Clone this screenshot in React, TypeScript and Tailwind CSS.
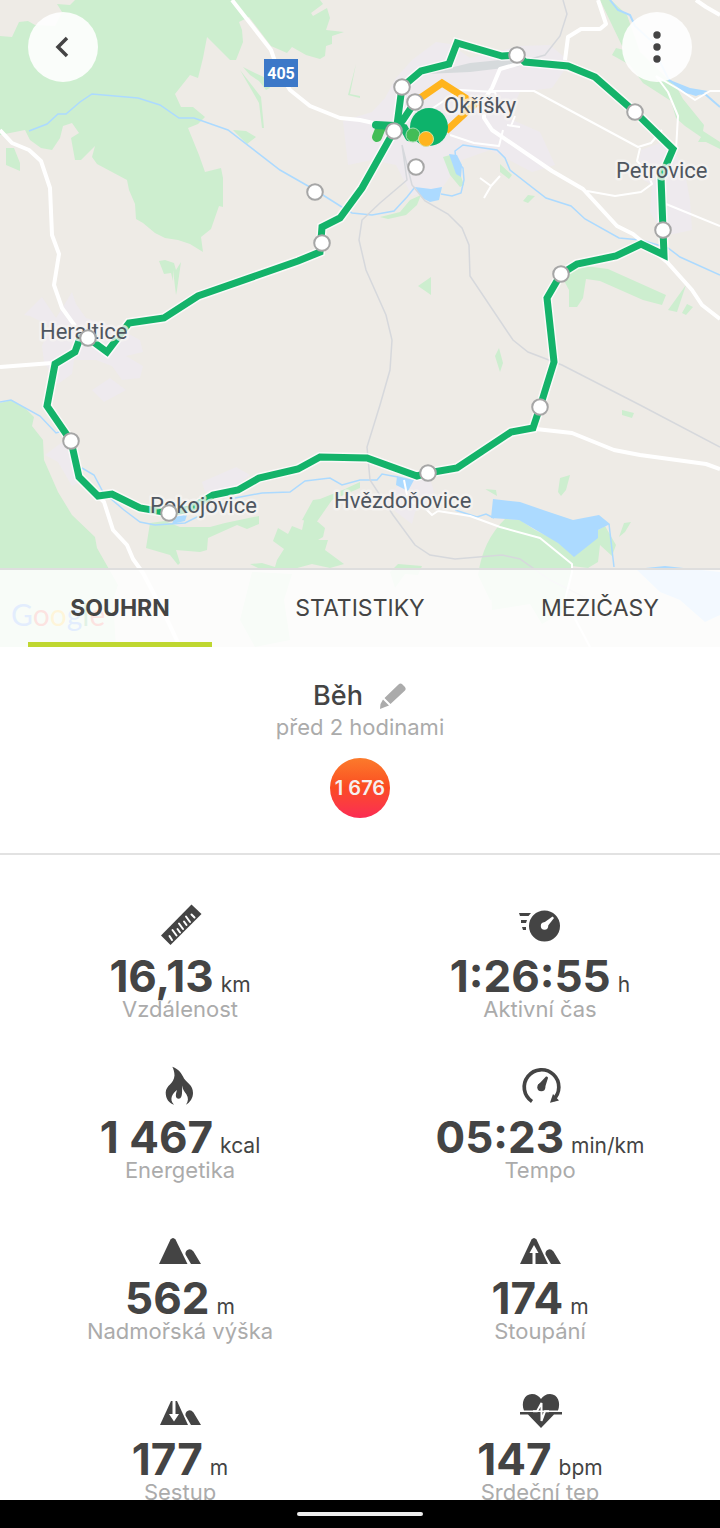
import React, { useState } from 'react';

const ROUTE =
  'M394 131L397 125L402 87L421 71L449 64L457 43L502 56L517 55L525 62L568 66L595 77L635 112L673 149L661 177L663 230L664 255L641 244L616 256L577 264L561 274L547 298L554 362L540 407L533 428L511 432L457 468L428 473L417 476L367 458L320 457L298 469L259 478L238 490L213 495L190 509L169 513L140 508L112 494L98 496L79 477L71 441L47 406L55 364L75 352L80 338H88L107 352L129 323L164 318L198 296L298 261L320 252L322 227L340 218L362 188L394 131L403 120L415 102';

const MARKERS = [
  [517, 55], [402, 87], [415, 102], [394, 131], [416, 167], [635, 112], [663, 230],
  [561, 274], [540, 407], [428, 473], [169, 513], [71, 441], [88, 338], [322, 243], [315, 192],
];

const PLACES = [
  { name: 'Okříšky', x: 444, y: 113 },
  { name: 'Petrovice', x: 616, y: 178 },
  { name: 'Heraltice', x: 40, y: 339 },
  { name: 'Pokojovice', x: 150, y: 513 },
  { name: 'Hvězdoňovice', x: 334, y: 508 },
];

const RouteMap = () => (
  <svg viewBox="0 0 720 647" preserveAspectRatio="xMidYMin slice" className="absolute inset-0 h-full w-full bg-[#eeebe6]" aria-label="Mapa trasy">
    {/* Built-up areas */}
    <g fill="#eeeaee">
      <path d="M343 121L372 112L385 98L396 78L412 60L436 42L450 44L470 58L520 46L550 45L570 62L552 88L520 92L508 118L540 132L555 165L532 172L490 150L462 160L442 188L412 196L396 165L372 160L348 165Z" />
      <path d="M641 150L668 140L684 168L690 200L692 230L664 236L650 212L652 185L636 175Z" />
      <path d="M24 315L42 297L56 318L72 292L76 304L86 318L118 328L140 340L143 352L126 356L143 366L140 378L122 380L112 366L96 360L74 360L72 374L58 384L44 362L42 346L50 326L30 316ZM92 390L110 378L126 390L104 402Z" />
      <path d="M45 455L65 440L74 452L84 480L72 486L58 462ZM202 482L236 467L250 475L232 490L205 492ZM405 480L430 478L434 492L415 512L412 524L396 512L382 500Z" />
    </g>

    {/* Forests */}
    <g fill="#cdeecf">
      <path d="M75 0L70 5L57 4L62 12L55 26L35 25L28 21L19 22L12 37L0 36V135L25 130L30 140L41 148L52 150L60 138L63 126L72 123L79 133L71 138L75 160H81L95 146L92 157L97 164L127 180L129 190L135 204L136 219L143 223L155 233L165 238L178 240L190 244L203 252L201 237L211 229L219 206L223 207V178L221 168L205 172L199 155L188 128L198 124L205 117L193 107H181L175 94L190 75L198 78L203 58L207 37L230 60H236L243 42L242 30L239 22L249 17L271 46L287 53L292 47L306 55L320 59L325 56L326 46L332 44V36L344 32L326 30L330 18L327 8L313 16L311 13L323 4L320 0Z" />
      <path d="M6 148H14L20 163L20 171L6 165ZM233 130L246 131L256 137L247 144ZM159 261L165 260L174 263L176 270L181 262L177 290L176 295L173 270L173 281L171 273L164 274Z" />
      <path d="M243 67L255 73L266 78L270 88L266 90L259 81L250 75ZM240 70L261 97L264 128L262 128L259 103ZM356 64L348 95L360 98V96L350 94Z" />
      <path d="M600 0H611L627 15L640 52L668 79L677 88L683 99L704 125L703 131L720 142V149L706 142L698 142L701 137L685 126L676 118L671 101L643 83L630 65L612 55L616 48L624 50Z" />
      <path d="M443 157L450 155L457 165L464 185L460 187L450 175ZM500 164L512 175L509 179L500 172ZM523 201L528 195L535 196L528 203ZM380 217L400 212L410 200L421 195L417 205L406 215L388 219ZM418 286L431 277V295Z" />
      <path d="M561 275L585 266L608 269L666 295L662 305L643 300L600 281L586 279L583 298L577 307H569V290ZM668 310L686 285L677 312ZM687 304L693 307L686 315L682 313ZM499 348L503 363L500 372L495 356ZM622 410L634 413L632 418L622 415ZM484 489L496 490L497 496L485 489ZM560 478L570 475L566 490L561 496L558 492ZM624 523L631 522L625 532L619 537Z" />
      <path d="M0 403L12 400L25 408L34 417L32 426L43 440L44 460L58 492L72 515L95 537L97 548L118 585L113 600L116 647H0Z" />
      <path d="M150 523L165 521L180 527L210 527L225 523L259 516L259 524L247 529L237 525L208 538L207 550L200 552L176 550L180 563L178 565L170 555L146 548Z" />
      <path d="M320 499L345 489L360 482V488L332 500L316 523L302 520L313 500ZM305 516L318 522L325 528L323 537L318 540L328 540L325 550L344 564L330 568L312 564L290 570L262 570L250 564L262 563L275 567L277 560L284 549L273 541L278 528L288 534L292 526L302 530ZM398 564L422 566L418 575L405 574L395 588L390 572Z" />
      <path d="M505 519L520 520L535 530L575 550L590 535L605 526L616 545L612 556L600 545L598 562L588 568L572 566L568 590L545 598L518 590L490 600L478 575Q483 540 505 519Z" />
      <path d="M252 572L292 574L284 600L290 640L255 647L240 620ZM490 572H570L566 610L542 624L530 604L492 610Z" />
    </g>

    {/* Water */}
    <g fill="#acdaff">
      <path d="M415 187L431 189L442 187L439 200L430 202L422 198ZM449 154L457 155L462 165L461 177L456 174ZM493 499L520 502L546 511L573 520L599 515L610 524L598 530L598 538L574 557L558 543L519 520L491 518ZM670 80L690 88L708 91L696 96L686 93ZM397 476L414 480L408 491L396 485ZM175 516L187 515L185 521L172 524Z" />
      <path d="M636 569L665 566L720 572V615L705 622L680 600L660 592Z" />
    </g>
    <g fill="none" stroke="#acdaff" strokeWidth="2">
      <path strokeWidth="1.5" d="M29 131L47 124L58 114L66 114L80 102L92 94L138 98L160 105L179 118H194L228 130L280 170L315 190L345 209L352 213L372 215L394 211L407 197L415 187M441 194L452 196L461 193L464 180L463 168L456 160L455 151L463 145L497 150L505 158L510 170L546 198L571 206L585 219L619 238L641 240L668 248L680 257L720 275" />
      <path d="M610 0L618 10L630 15L635 26L648 38L656 44L660 62L669 80L686 92L705 94L720 107" />
      <path strokeWidth="1.5" d="M0 402L11 400L40 416L56 433L66 430M82 468L94 475L103 492L124 510L140 522L155 525L185 523L205 513L235 498L262 493L290 492L305 481L330 478L342 485L360 480L377 480L382 474L398 477M455 510L477 517L486 514L494 518M609 524L614 567" />
    </g>

    {/* Railways */}
    <g fill="none" stroke="#d6d8dc" strokeWidth="1.5">
      <path d="M563 0L567 14L560 36L545 55L520 62M402 145L407 180L380 203L362 220L359 240L366 270L386 315L392 340L390 370L380 405L367 447L370 480L393 515L415 545L430 555L455 559L502 555L520 559L550 580L590 600M402 145L412 185L425 201L448 214L462 228L469 245L470 276L513 340L528 352L562 365L640 405L720 447" />
      <path fill="#d6dadc" stroke="none" d="M425 74L470 63L520 58L520 66L470 72Z" />
    </g>

    {/* Roads */}
    <g fill="none" stroke="#fff" strokeWidth="4" strokeLinejoin="round">
      <path d="M232 0L271 50L278 70L290 90L310 106L340 118L360 120L378 124M0 130L12 143L29 150L41 161L50 188L52 235L59 254L54 285L62 308L75 326M0 367L52 363M78 475L104 502L113 530L127 545L133 559L143 573L165 615L180 647" />
      <path d="M598 0L606 24L600 29L581 29L568 37L565 60M696 0L706 7L720 15M525 62L500 69L492 88L484 100V118L492 130L552 171L583 189L617 226L633 234L667 262L692 290L702 305L720 319M536 429L572 433L614 450L640 455L706 464L720 469" />
      <path strokeWidth="2" d="M490 91H534L638 147L651 143L662 130M640 148L637 161L647 172L652 184L641 192L615 196L587 191M450 135L474 143L499 146L503 130M666 204L720 226M656 76L668 92L678 116L676 150L668 160M656 76L680 90L695 100L710 91H720M430 110L460 90L495 92L500 110" />
      <path strokeWidth="2" d="M480 178L491 186L500 176M491 186L484 198M507 125L520 127M515 116L511 126M404 480L408 500L425 508L432 515L438 511L470 516L500 527L540 538L572 564V572L565 600L590 647" />
    </g>

    {/* Road number shield */}
    <path d="M264 59H298V87H264Z" fill="#3c78c8" />
    <text x="281" y="79" textAnchor="middle" className="fill-white font-['Roboto',sans-serif] text-[16px] font-bold">405</text>

    {/* Recorded track */}
    <path d={ROUTE} fill="none" stroke="#fff" strokeOpacity="0.7" strokeWidth="10" />
    <path d="M381 127L377 137" stroke="#43bd57" strokeWidth="10" strokeLinecap="round" />
    <path d="M376 125L394 126L404 128L409 137" fill="none" stroke="#16b36a" strokeWidth="8" strokeLinecap="round" />
    <path d="M416 101L442 83L475 104L446 131" fill="none" stroke="#ffb41e" strokeWidth="7" />
    <path d={ROUTE} fill="none" stroke="#14b36a" strokeWidth="7" />
    <circle cx="429" cy="127" r="19" fill="#0db36b" />
    <circle cx="413" cy="135" r="7" fill="#43bd57" stroke="#a3deb0" />
    <circle cx="426" cy="139" r="7.5" fill="#ffb41e" stroke="#d9dd9a" />

    {PLACES.map((place) => (
      <text
        key={place.name}
        x={place.x}
        y={place.y}
        paintOrder="stroke"
        stroke="#f6f4f2"
        strokeOpacity="0.8"
        strokeWidth="5"
        strokeLinejoin="round"
        className="fill-[#4f565f] font-['Roboto',sans-serif] text-[22px]"
      >
        {place.name}
      </text>
    ))}

    {MARKERS.map(([x, y]) => (
      <circle key={`${x}-${y}`} cx={x} cy={y} r="7.8" fill="#fff" stroke="#a6a6a6" strokeWidth="2" />
    ))}

    <text x="11" y="626" className="font-['Lato',sans-serif] text-[30px]">
      <tspan fill="#4285f4">G</tspan>
      <tspan fill="#ea4335">o</tspan>
      <tspan fill="#fbbc05">o</tspan>
      <tspan fill="#4285f4">g</tspan>
      <tspan fill="#34a853">l</tspan>
      <tspan fill="#ea4335">e</tspan>
    </text>
  </svg>
);

const smallPeak = <path d="M32 38L26.5 28.5Q26 25.5 28.5 24Q31.5 22 34.5 25.5L42 38Z" />;

const icons = {
  ruler: (
    <>
      <path d="M32.5 0.5L42.5 10L11.5 41L2 31.5Z" />
      <path d="M10.5 32L13 36M13.5 26L17.5 31.5M18.5 25L21 28.5M20 19.5L24 25M25 17.5L27.5 21M27 12.5L31 18M32.5 10.5L35.5 13.5" stroke="#fff" strokeWidth="2" strokeLinecap="round" />
    </>
  ),
  timer: (
    <>
      <path d="M0 9H12L9.5 12H1ZM2 16H8L7 19H2ZM3 23H7V26H4Z" />
      <circle cx="25.5" cy="22" r="15.5" />
      <circle cx="25.5" cy="22" r="3.7" fill="#fff" />
      <path d="M24.5 19L33.5 12.5L35 14L28 23Z" fill="#fff" />
    </>
  ),
  flame: (
    <path d="M13.3 1.7C20 4 23 9 25 13.5C28 18 34 20 34 28C34 33 31 37.500 27 39.7C29.500 36 29.500 33 27.500 29.500C26 27 23.500 25 23.500 20.500C22.500 24 24.500 33.500 19.800 33.700C16 33.500 16.500 29.500 18 25C14 28 9.500 34 15 39.7C10 38 6.7 34 6.7 27.5C7 20 15 19 15.5 10.500C15.500 7 14.5 4 13.3 1.7Z" />
  ),
  pace: (
    <>
      <path d="M13 36.5A17.3 17.3 0 1 1 34 35" fill="none" stroke="currentColor" strokeWidth="3.7" />
      <path d="M34 29L40 35.5L31 37.7ZM19 20L27 11.5Q29 11 29 13L25.5 24Z" />
      <circle cx="22.3" cy="22.3" r="4" />
    </>
  ),
  altitude: (
    <>
      <path d="M0 38L11.5 13.5Q14 10.5 16.5 13.5L28.5 38Z" />
      {smallPeak}
    </>
  ),
  ascent: (
    <>
      <path d="M1 38L12.5 13.5Q15 10.5 17.5 13.5L29 38Z" />
      {smallPeak}
      <path d="M13.5 38V27H10.5L15 19L19.5 27H16.5V38Z" fill="#fff" />
    </>
  ),
  descent: (
    <>
      <path d="M1 38L12 14H18L29 38Z" />
      {smallPeak}
      <path d="M13.5 13V27H10L15 34.5L20 27H16.5V13Z" fill="#fff" />
    </>
  ),
  heart: (
    <>
      <path d="M5 23.5C2 16 5 7 13 7C17 7 20 9 22 12C24 9 27 7 31 7C39 7 42 16 39 23.5ZM1 25H43V27.5H35L22 41L9 27.5H1Z" />
      <path d="M14 24.3H18L22.5 16V34L26 24.3H30" fill="none" stroke="#fff" strokeWidth="2" />
    </>
  ),
};

const STATS: { icon: keyof typeof icons; value: string; unit: string; label: string }[] = [
  { icon: 'ruler', value: '16,13', unit: 'km', label: 'Vzdálenost' },
  { icon: 'timer', value: '1:26:55', unit: 'h', label: 'Aktivní čas' },
  { icon: 'flame', value: '1 467', unit: 'kcal', label: 'Energetika' },
  { icon: 'pace', value: '05:23', unit: 'min/km', label: 'Tempo' },
  { icon: 'altitude', value: '562', unit: 'm', label: 'Nadmořská výška' },
  { icon: 'ascent', value: '174', unit: 'm', label: 'Stoupání' },
  { icon: 'descent', value: '177', unit: 'm', label: 'Sestup' },
  { icon: 'heart', value: '147', unit: 'bpm', label: 'Srdeční tep' },
];

const TABS = ['SOUHRN', 'STATISTIKY', 'MEZIČASY'];

export default function App() {
  const [tab, setTab] = useState(TABS[0]);

  return (
    <div className="flex h-screen flex-col overflow-hidden bg-white font-['Inter',sans-serif] text-[#444]">
      <main className="min-h-0 flex-1 overflow-hidden">
        <header className="relative flex h-[647px] flex-col justify-between">
          <RouteMap />

          <div className="relative flex justify-between px-7 py-3">
            <button aria-label="Zpět" className="flex size-[70px] items-center justify-center rounded-full bg-white/90">
              <svg width="24" height="24" viewBox="0 0 24 24" fill="none" stroke="currentColor" strokeWidth="3.5">
                <path d="M16 3L7 12L16 21" />
              </svg>
            </button>
            <button aria-label="Další možnosti" className="flex size-[70px] items-center justify-center rounded-full bg-white/90">
              <svg width="8" height="32" viewBox="0 0 8 32" fill="currentColor">
                <circle cx="4" cy="4" r="3.7" />
                <circle cx="4" cy="16" r="3.7" />
                <circle cx="4" cy="28" r="3.7" />
              </svg>
            </button>
          </div>

          {/* Tabs */}
          <div role="tablist" className="relative grid grid-cols-3 border-t-2 border-[#dedede] bg-white/85">
            {TABS.map((name) => (
              <button
                key={name}
                role="tab"
                aria-selected={tab === name}
                onClick={() => setTab(name)}
                className={`mx-7 h-[77px] border-b-5 pt-1 text-[23px] ${tab === name ? 'border-[#bfd730] font-bold' : 'border-transparent'}`}
              >
                {name}
              </button>
            ))}
          </div>
        </header>

        <section className="flex flex-col items-center border-b-2 border-[#e2e2e2] pt-8 pb-[35px]">
          <div className="flex items-center gap-4">
            <h1 className="text-[27px] leading-[34px] font-medium">Běh</h1>
            <button aria-label="Upravit">
              <svg width="28" height="28" viewBox="0 0 28 28" fill="#ababab">
                <path d="M19.5 2.5Q21.5 0.5 23.5 2.5L26 5Q27.5 7 26 8.5L11.5 22L5.5 16Z" />
                <path d="M4 17.5L10 23.5L6 25L1 27L1.5 22Z" />
              </svg>
            </button>
          </div>
          <p className="text-[22px] leading-7 text-[#ababab]">před 2 hodinami</p>
          <div className="mt-[17px] flex size-[60px] items-center justify-center rounded-full bg-linear-to-b from-[#fb7a2b] via-[#fb4a22] to-[#fb2b52] text-xl font-semibold whitespace-nowrap text-[#f5f0f0]">
            1 676
          </div>
        </section>

        <section className="grid grid-cols-2 gap-y-[45px] pt-[49px]">
          {STATS.map((stat) => (
            <div key={stat.label} className="flex flex-col items-center">
              <svg width="42" height="42" viewBox="0 0 42 42" fill="currentColor" className="overflow-visible">
                {icons[stat.icon]}
              </svg>
              <p className="mt-2 flex items-baseline gap-[7px]">
                <span className="text-[44px] leading-[44px] font-bold">{stat.value}</span>
                <span className="text-[21px] leading-[22px]">{stat.unit}</span>
              </p>
              <p className="text-[22px] leading-[22px] text-[#ababab]">{stat.label}</p>
            </div>
          ))}
        </section>
      </main>

      {/* System navigation bar */}
      <footer className="flex h-7 shrink-0 items-center justify-center bg-black">
        <div className="h-1 w-[126px] rounded-full bg-[#eee]" />
      </footer>
    </div>
  );
}
